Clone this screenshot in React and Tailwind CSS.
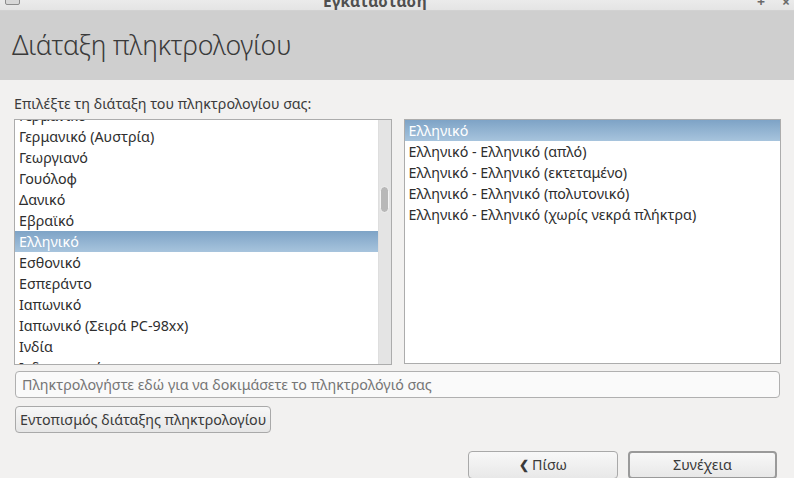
import React from "react";

const leftItems = [
  "Γερμανικό",
  "Γερμανικό (Αυστρία)",
  "Γεωργιανό",
  "Γουόλοφ",
  "Δανικό",
  "Εβραϊκό",
  "Ελληνικό",
  "Εσθονικό",
  "Εσπεράντο",
  "Ιαπωνικό",
  "Ιαπωνικό (Σειρά PC-98xx)",
  "Ινδία",
  "Ινδονησιακό",
];

const rightItems = [
  "Ελληνικό",
  "Ελληνικό - Ελληνικό (απλό)",
  "Ελληνικό - Ελληνικό (εκτεταμένο)",
  "Ελληνικό - Ελληνικό (πολυτονικό)",
  "Ελληνικό - Ελληνικό (χωρίς νεκρά πλήκτρα)",
];

function Row({ text, selected }) {
  return (
    <div
      className={
        "h-[21px] leading-[21px] pl-[4px] whitespace-nowrap " +
        (selected
          ? "bg-gradient-to-b from-[#7ea3c6] to-[#a7c4dd] text-white"
          : "text-[#2e2e2e]")
      }
    >
      {text}
    </div>
  );
}

export default function App() {
  return (
    <div
      className="w-[794px] h-[478px] overflow-hidden bg-[#f2f1f0] flex flex-col text-[14.3px]"
      style={{ fontFamily: '"Noto Sans", "Open Sans", sans-serif' }}
    >
      {/* title bar */}
      <div className="relative h-[11px] shrink-0 bg-gradient-to-b from-[#ebebeb] to-[#e4e4e4] border-b border-[#d2d2d2] overflow-hidden">
        <div className="absolute left-[5px] top-[-6px] w-[15px] h-[11px] rounded-[2px] border border-[#8d8d8d] bg-[#d8d8d8]" />
        <div className="absolute left-[323px] top-[-10px] font-bold text-[15.5px] text-[#505050] whitespace-nowrap">
          Εγκατάσταση
        </div>
        <div className="absolute left-[757px] top-[-9px] text-[#6a6a6a] text-[14px] font-bold">+</div>
        <div className="absolute left-[782px] top-[-9px] text-[#6a6a6a] text-[14px] font-bold">×</div>
      </div>

      {/* header */}
      <div className="h-[69px] shrink-0 bg-[#cfcfcf] flex items-center pl-[12px]">
        <div className="text-[26.7px] text-[#3a3a3a] font-light tracking-[-0.2px]">
          Διάταξη πληκτρολογίου
        </div>
      </div>

      {/* body */}
      <div className="flex flex-col pl-[14px] pr-[13px] pt-[15px]">
        <div className="text-[#3c3c3c] leading-[18px] h-[24px]">
          Επιλέξτε τη διάταξη του πληκτρολογίου σας:
        </div>

        <div className="flex gap-[12px] h-[246px]">
          <div className="w-[378px] border border-[#acacac] bg-white flex overflow-hidden">
            <div className="flex-1 overflow-hidden">
              <div className="mt-[-15px]">
                {leftItems.map((t) => (
                  <Row key={t} text={t} selected={t === "Ελληνικό"} />
                ))}
              </div>
            </div>
            <div className="w-[13px] bg-[#e4e4e4] border-l border-[#dedede] flex justify-center">
              <div className="mt-[66px] w-[9px] h-[27px] rounded-[5px] bg-[#b8b8b8] border border-[#f4f4f4]" />
            </div>
          </div>
          <div className="w-[378px] h-[245px] border border-[#acacac] bg-white overflow-hidden">
            {rightItems.map((t, i) => (
              <Row key={t} text={t} selected={i === 0} />
            ))}
          </div>
        </div>

        <div className="mt-[6px] ml-[1px] w-[765px] h-[27px] rounded-[4px] border border-[#b0b0b0] bg-[#fafafa] flex items-center pl-[6px] text-[#767676]">
          Πληκτρολογήστε εδώ για να δοκιμάσετε το πληκτρολόγιό σας
        </div>

        <div className="mt-[8px] ml-[1px]">
          <div className="inline-flex items-center h-[27px] px-[4px] rounded-[4px] border border-[#a9a9a9] bg-gradient-to-b from-[#f7f7f7] to-[#e6e6e6] text-[#3a3a3a]">
            Εντοπισμός διάταξης πληκτρολογίου
          </div>
        </div>

        <div className="mt-[18px] flex justify-end gap-[10px] pr-[4px]">
          <div className="w-[150px] h-[28px] rounded-[4px] border border-[#a9a9a9] bg-gradient-to-b from-[#f8f8f8] to-[#e8e8e8] flex items-center justify-center text-[#3a3a3a]">
            <span className="mr-[3px] text-[12px] font-bold">❮</span>Πίσω
          </div>
          <div className="w-[149px] h-[28px] rounded-[4px] border-2 border-[#9a9a9a] bg-gradient-to-b from-[#f8f8f8] to-[#e8e8e8] flex items-center justify-center text-[#3a3a3a]">
            Συνέχεια
          </div>
        </div>
      </div>
    </div>
  );
}
